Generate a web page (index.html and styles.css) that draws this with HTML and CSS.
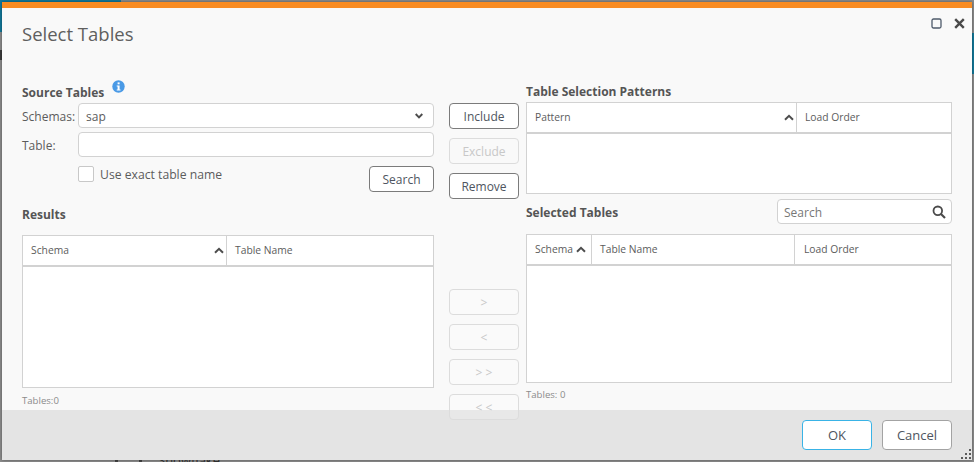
FILE: index.html
```html
<!DOCTYPE html>
<html lang="en">
<head>
    <meta charset="UTF-8">
    <title>Select Tables</title>
    <link rel="stylesheet" href="styles.css">
</head>
<body>
    <!-- Page behind the dialog -->
    <div class="backdrop">
        <div class="strip-top"></div>
        <div class="strip-left"></div>
        <div class="strip-left-dark"></div>
        <div class="strip-right"></div>
        <div class="mark mark-one"></div>
        <div class="mark mark-two"></div>
        <div class="behind-text">Snowflake</div>
    </div>

    <div class="dialog">
        <div class="dialog-bar"></div>

        <div class="dialog-body">
            <div class="dialog-header">
                <h1>Select Tables</h1>
                <div class="window-controls">
                    <svg class="icon-max" width="11" height="11" viewBox="0 0 11 11"><rect x="1" y="1" width="9" height="9" rx="1.5" fill="none" stroke="#4f5b6b" stroke-width="1.3"/></svg>
                    <svg class="icon-close" width="11" height="11" viewBox="0 0 11 11"><path d="M1.2 1.2L9.8 9.8M9.8 1.2L1.2 9.8" fill="none" stroke="#4a4a4a" stroke-width="2.4"/></svg>
                </div>
            </div>

            <div class="columns">
                <!-- Source tables and results -->
                <div class="col-left">
                    <div class="source-title">
                        <h2>Source Tables</h2>
                        <svg class="icon-info" width="13" height="13" viewBox="0 0 13 13"><circle cx="6.5" cy="6.5" r="6.2" fill="#4a9ae6"/><rect x="5.6" y="2.4" width="2" height="1.9" fill="#fff"/><path d="M4.7 5.4H7.6V9.4H8.5V10.6H4.7V9.4H5.6V6.6H4.7Z" fill="#fff"/></svg>
                    </div>
                    <div class="form-row">
                        <label>Schemas:</label>
                        <div class="field select-field">
                            <span>sap</span>
                            <svg width="8" height="6" viewBox="0 0 8 6"><path d="M0.7 1L4 4.4L7.3 1" fill="none" stroke="#4d4d4d" stroke-width="1.9"/></svg>
                        </div>
                    </div>
                    <div class="form-row form-row-table">
                        <label>Table:</label>
                        <div class="field"></div>
                    </div>
                    <div class="search-row">
                        <div class="check-wrap">
                            <span class="checkbox"></span>
                            <span class="check-label">Use exact table name</span>
                        </div>
                        <button class="btn btn-search">Search</button>
                    </div>
                    <h2 class="results-title">Results</h2>
                    <div class="table table-results">
                        <div class="table-head head-results">
                            <div class="cell cell-sort">Schema
                                <svg width="10" height="7" viewBox="0 0 10 7"><path d="M1 5.8L5 1.8L9 5.8" fill="none" stroke="#4d4d4d" stroke-width="2"/></svg>
                            </div>
                            <div class="cell">Table Name</div>
                        </div>
                    </div>
                    <div class="count">Tables:0</div>
                </div>

                <!-- Buttons between the lists -->
                <div class="col-mid">
                    <button class="btn">Include</button>
                    <button class="btn btn-off">Exclude</button>
                    <button class="btn">Remove</button>
                    <button class="btn btn-off btn-arrow btn-first">&gt;</button>
                    <button class="btn btn-off btn-arrow">&lt;</button>
                    <button class="btn btn-off btn-arrow">&gt; &gt;</button>
                    <button class="btn btn-off btn-arrow">&lt; &lt;</button>
                </div>

                <!-- Patterns and selected tables -->
                <div class="col-right">
                    <h2>Table Selection Patterns</h2>
                    <div class="table table-patterns">
                        <div class="table-head head-patterns">
                            <div class="cell cell-sort">Pattern
                                <svg width="10" height="7" viewBox="0 0 10 7"><path d="M1 5.8L5 1.8L9 5.8" fill="none" stroke="#4d4d4d" stroke-width="2"/></svg>
                            </div>
                            <div class="cell">Load Order</div>
                        </div>
                    </div>
                    <div class="selected-row">
                        <h2>Selected Tables</h2>
                        <div class="field search-field">
                            <span>Search</span>
                            <svg width="14" height="14" viewBox="0 0 14 14"><circle cx="5.8" cy="5.8" r="4.3" fill="none" stroke="#4a4a4a" stroke-width="1.8"/><path d="M9 9L13 13" stroke="#4a4a4a" stroke-width="2.2"/></svg>
                        </div>
                    </div>
                    <div class="table table-selected">
                        <div class="table-head head-selected">
                            <div class="cell cell-sort">Schema
                                <svg width="10" height="7" viewBox="0 0 10 7"><path d="M1 5.8L5 1.8L9 5.8" fill="none" stroke="#4d4d4d" stroke-width="2"/></svg>
                            </div>
                            <div class="cell">Table Name</div>
                            <div class="cell">Load Order</div>
                        </div>
                    </div>
                    <div class="count count-selected">Tables: 0</div>
                </div>
            </div>
        </div>

        <div class="dialog-footer">
            <button class="btn btn-footer btn-ok">OK</button>
            <button class="btn btn-footer">Cancel</button>
            <svg class="grip" width="11" height="11" viewBox="0 0 11 11" fill="#5a5a5a"><rect x="8" y="0" width="2" height="2"/><rect x="4" y="4" width="2" height="2"/><rect x="8" y="4" width="2" height="2"/><rect x="0" y="8" width="2" height="2"/><rect x="4" y="8" width="2" height="2"/><rect x="8" y="8" width="2" height="2"/></svg>
        </div>
    </div>
</body>
</html>
```

FILE: styles.css
```css
/* General */
* {
    box-sizing: border-box;
}

html, body {
    margin: 0;
    height: 462px;
    overflow: hidden;
}

body {
    position: relative;
    padding: 2px;
    background-color: #8c8c8c;
    font-family: "Open Sans", sans-serif;
    font-size: 12px;
    color: #5c5c5c;
}

/* Page behind the dialog */
.backdrop div {
    position: absolute;
}

.strip-top {
    left: 0;
    top: 0;
    width: 121px;
    height: 2px;
    background-color: #12789a;
}

.strip-left {
    left: 0;
    top: 2px;
    width: 2px;
    height: 30px;
    background-color: #12789a;
}

.strip-left-dark {
    left: 0;
    top: 50px;
    width: 2px;
    height: 10px;
    background-color: #3a3a3a;
}

.strip-right {
    right: 0;
    top: 33px;
    width: 2px;
    height: 41px;
    background-color: #12789a;
}

.mark {
    top: 460px;
    width: 3px;
    height: 2px;
    background-color: #444;
}

.mark-one {
    left: 115px;
}

.mark-two {
    left: 139px;
}

.behind-text {
    left: 158px;
    top: 451px;
    font-size: 13px;
    color: #333;
}

/* Dialog */
.dialog {
    position: relative;
    width: 970px;
    height: 458px;
    display: flex;
    flex-direction: column;
    background-color: #f9f9f9;
    box-shadow: 0 0 3px rgba(0, 0, 0, 0.4);
}

.dialog-bar {
    height: 6px;
    flex-shrink: 0;
    background-color: #f98c22;
}

.dialog-body {
    position: relative;
    z-index: 1;
    height: 402px;
    flex-shrink: 0;
    padding: 0 20px;
}

.dialog-header {
    display: flex;
    justify-content: space-between;
    height: 74px;
}

h1 {
    margin: 12px 0 0;
    font-size: 18.5px;
    line-height: 28px;
    font-weight: 400;
    color: #5f5f5f;
}

.window-controls {
    display: flex;
    gap: 12px;
    height: 11px;
    margin: 10px -13px 0 0;
}

h2 {
    margin: 0;
    font-size: 12px;
    line-height: 20px;
    font-weight: 700;
    color: #555;
}

.columns {
    display: flex;
}

.col-left {
    width: 412px;
    margin-right: 15px;
}

.col-mid {
    width: 70px;
    margin-right: 7px;
    padding-top: 21px;
    display: flex;
    flex-direction: column;
    gap: 9px;
}

.col-right {
    width: 426px;
}

/* Left column form */
.source-title {
    display: flex;
    height: 21px;
    padding-top: 1px;
}

.icon-info {
    margin: -3px 0 0 8px;
}

.form-row {
    display: flex;
    align-items: center;
    height: 25px;
}

.form-row-table {
    margin-top: 4px;
}

.form-row label {
    width: 56px;
    flex-shrink: 0;
    padding-top: 1px;
}

.field {
    flex: 1;
    height: 25px;
    display: flex;
    align-items: center;
    justify-content: space-between;
    padding: 1px 10px 0 7px;
    background-color: #fff;
    border: 1px solid #d2d2d2;
    border-radius: 4px;
}

.search-row {
    display: flex;
    justify-content: space-between;
    margin-top: 9px;
    padding-left: 56px;
    height: 26px;
}

.check-wrap {
    display: flex;
    align-items: flex-start;
    gap: 6px;
    line-height: 16px;
}

.check-label {
    padding-top: 1px;
    font-size: 12.2px;
}

.checkbox {
    width: 16px;
    height: 16px;
    background-color: #fff;
    border: 1px solid #c8c8c8;
    border-radius: 2px;
}

.results-title {
    margin-top: 13px;
}

/* Buttons */
.btn {
    height: 26px;
    padding: 0;
    background-color: #fff;
    border: 1px solid #7b7b7b;
    border-radius: 4px;
    font-family: inherit;
    font-size: 12px;
    color: #4e5560;
}

.btn-search {
    width: 65px;
}

.btn-off {
    background-color: transparent;
    border-color: #dcdcdc;
    color: #c8c8c8;
}

.btn-arrow {
    background-color: rgba(255, 255, 255, 0.15);
}

.btn-first {
    margin-top: 81px;
}

/* Tables */
.table {
    background-color: #fff;
    border: 1px solid #d2d2d2;
}

.table-results {
    margin-top: 10px;
    height: 153px;
}

.table-patterns {
    height: 92px;
}

.table-selected {
    margin-top: 10px;
    height: 149px;
}

.table-head {
    display: grid;
    height: 31px;
    border-bottom: 2px solid #d2d2d2;
}

.head-results {
    grid-template-columns: 203px 1fr;
}

.head-patterns {
    grid-template-columns: 269px 1fr;
}

.head-selected {
    grid-template-columns: 64px 203px 1fr;
}

.cell {
    display: flex;
    align-items: center;
    justify-content: space-between;
    padding: 0 8px 1px;
    font-size: 10.3px;
    border-left: 1px solid #d2d2d2;
}

.cell:first-child {
    border-left: none;
}

.cell-sort {
    padding-right: 2px;
}

.head-selected .cell-sort {
    padding-right: 5px;
}

.head-selected .cell:last-child {
    padding-left: 9px;
}

.count {
    margin-top: 6px;
    font-size: 9.6px;
    line-height: 14px;
    color: #8b8b8b;
}

.count-selected {
    margin-top: 5px;
}

/* Right column */
.selected-row {
    display: flex;
    justify-content: space-between;
    align-items: center;
    margin-top: 5px;
    height: 25px;
}

.selected-row h2 {
    margin-top: 3px;
}

.search-field {
    flex: 0 0 175px;
    padding: 1px 5px 0 6px;
    color: #777;
}

/* Footer */
.dialog-footer {
    position: relative;
    flex: 1;
    display: flex;
    justify-content: flex-end;
    align-items: flex-start;
    gap: 10px;
    padding: 10px 20px 0 0;
    background-color: #e4e4e4;
}

.btn-footer {
    width: 70px;
    height: 30px;
    font-size: 13px;
    border-color: #a3a3a3;
}

.btn-ok {
    border-color: #39b3e6;
}

.grip {
    position: absolute;
    right: 0;
    bottom: 0;
}
```
